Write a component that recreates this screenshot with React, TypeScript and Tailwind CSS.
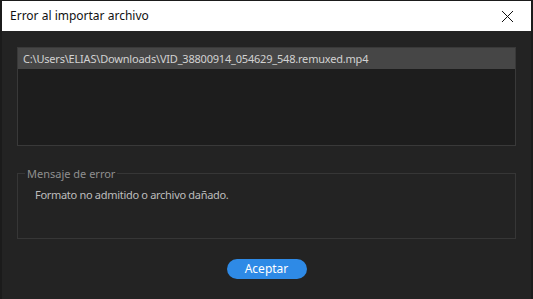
import React from "react";

export default function App() {
  return (
    <div className="w-[533px] h-[299px] bg-[#1b1b1b] overflow-hidden flex flex-col" style={{ fontFamily: '"Noto Sans", sans-serif' }}>
      <div className="mx-[2px] mt-[1px] flex flex-col flex-1 bg-[#232323]">
        <div className="h-[30px] bg-white flex items-center justify-between pl-[8px] pr-[17px]">
          <span className="text-[12px] text-[#111] leading-none">Error al importar archivo</span>
          <svg width="13" height="13" viewBox="0 0 13 13">
            <path d="M1 1 L12 12 M12 1 L1 12" stroke="#111" strokeWidth="1" fill="none" />
          </svg>
        </div>
        <div className="flex flex-col px-[15px] pt-[16px]">
          <div className="h-[99px] border border-[#393939] bg-[#1d1d1d]">
            <div className="h-[21px] bg-[#464646] flex items-center pl-[5px] text-[11px] tracking-[-0.2px] text-[#d2d2d2] leading-none">
              C:\Users\ELIAS\Downloads\VID_38800914_054629_548.remuxed.mp4
            </div>
          </div>
          <fieldset className="mt-[22px] h-[71px] border border-[#363636] pl-[7px] pr-0 m-0">
            <legend className="px-[2px] text-[11px] text-[#8f8f8f] leading-none">Mensaje de error</legend>
            <div className="pl-[10px] pt-[10px] text-[11px] tracking-[-0.3px] text-[#bdbdbd] leading-none">Formato no admitido o archivo dañado.</div>
          </fieldset>
          <div className="flex justify-center mt-[20px]">
            <button className="w-[80px] h-[20px] rounded-full bg-[#2e8ae6] text-white text-[12px] leading-none">Aceptar</button>
          </div>
        </div>
      </div>
    </div>
  );
}
